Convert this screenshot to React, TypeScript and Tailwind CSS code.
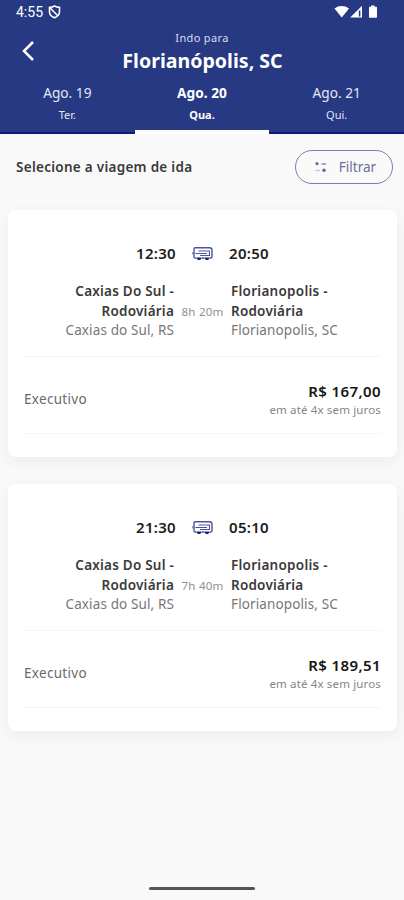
interface Trip {
  id: number;
  departure: string;
  arrival: string;
  duration: string;
  price: string;
}

interface Day {
  date: string;
  weekday: string;
  active?: boolean;
}

const days: Day[] = [
  { date: "Ago. 19", weekday: "Ter." },
  { date: "Ago. 20", weekday: "Qua.", active: true },
  { date: "Ago. 21", weekday: "Qui." },
];

const trips: Trip[] = [
  { id: 1, departure: "12:30", arrival: "20:50", duration: "8h 20m", price: "R$ 167,00" },
  { id: 2, departure: "21:30", arrival: "05:10", duration: "7h 40m", price: "R$ 189,51" },
];

const BusIcon = () => (
  <svg width="21" height="15" viewBox="0 0 21 15" fill="none" stroke="#4a549c">
    <path d="M4.5 12H3.2c-.8 0-1.2-.4-1.2-1.2V3c0-.8.4-1.200 1.200-1.200H17.500c1.300 0 2.500.9 2.500 2.200v6.500c0 1-.5 1.500-1.500 1.500h-1M9.500 12h3" strokeWidth="1.400" />
    <path d="M6.500 5h11v4.500H8M4 7.500h11M17.500 5V10" strokeWidth="1.100" />
    <path d="M.5 6v2.500M2 7.300h2" strokeWidth="1" opacity=".6" />
    <path d="M5 12a2 1.600 0 0 0 4 0zM13 12a2 1.600 0 0 0 4 0z" fill="#15207a" stroke="#15207a" strokeWidth="1" />
  </svg>
);

const StatusBar = () => (
  <div className="flex h-6 items-center justify-between pl-4 pr-[26px]">
    <div className="flex items-center gap-[5px]">
      <span className="font-[Roboto,sans-serif] text-[14px] leading-6">4:55</span>
      <svg width="13" height="14" viewBox="0 0 13 14" fill="none" stroke="currentColor" strokeWidth="1.600">
        <path d="M6.500 1C4.800 2 3 2.300 1.500 2.400v4.400c0 3 2.200 5 5 6 2.800-1 5-3 5-6V2.400C10 2.300 8.200 2 6.500 1z" />
        <path d="m2 2.800 8 8.200" />
      </svg>
    </div>
    <svg width="44" height="14" viewBox="0 0 44 14" fill="currentColor">
      <path d="M.5 3.500C4.800.2 10.700.2 15 3.500L7.700 12.500z" />
      <path d="M28 .8v11.700H16.200z" />
      <path d="M25.600 5.500v6" stroke="#263982" strokeWidth="1.600" />
      <path d="M37 .5h3.500v1.300H42c.6 0 1 .4 1 1v9c0 .6-.4 1-1 1h-6c-.6 0-1-.4-1-1v-9c0-.6.400-1 1-1h1z" />
    </svg>
  </div>
);

const Header = () => (
  <header className="flex h-[134px] flex-col bg-[#263982] text-white">
    <StatusBar />
    <div className="grid h-[56px] grid-cols-[60px_1fr_60px] pt-1">
      <button className="flex h-[46px] items-center pl-[20px]" aria-label="Voltar">
        <svg width="15" height="20" viewBox="0 0 15 20" fill="none" stroke="currentColor" strokeWidth="2.500">
          <path d="M13 1 4 10l9 9" />
        </svg>
      </button>
      <div className="text-center">
        <p className="pt-0.5 text-[11px] leading-4 tracking-[0.35px] text-[#d8dcf0]">Indo para</p>
        <h1 className="pt-[1px] pl-[1px] text-[19.600px] leading-7 font-bold whitespace-nowrap">Florianópolis, SC</h1>
      </div>
    </div>
    <div className="grid flex-1 grid-cols-3 text-center">
      {days.map((day) => (
        <div
          key={day.date}
          className={
            day.active
              ? "border-b-4 border-white pt-[3px] font-bold"
              : "border-b-2 border-[#0b1b7c] pt-[3px] text-[#e3e6f5]"
          }
        >
          <p className="text-[13.700px] leading-5">{day.date}</p>
          <p className="pt-[3px] text-[11px] leading-[18px]">{day.weekday}</p>
        </div>
      ))}
    </div>
  </header>
);

const TripCard = ({ trip }: { trip: Trip }) => (
  <article className="h-[247px] rounded-lg bg-white px-4 shadow-[0_4px_16px_rgba(0,0,0,0.06)]">
    <div className="flex h-[147px] flex-col border-b border-[#f5f5f5] pt-8 text-[13.500px] leading-[19.700px] tracking-[0.22px]">
      <div className="grid h-10 grid-cols-[152px_53px_1fr] text-[15px] leading-[22px] font-semibold tracking-[0.3px] text-[#1c1c1c]">
        <p className="text-right">{trip.departure}</p>
        <div className="flex h-[23px] items-center justify-center">
          <BusIcon />
        </div>
        <p>{trip.arrival}</p>
      </div>
      <div className="grid grid-cols-[150px_57px_1fr] items-center">
        <div className="text-right">
          <p className="font-semibold text-[#3a3a3a]">Caxias Do Sul -</p>
          <p className="font-semibold text-[#3a3a3a]">Rodoviária</p>
          <p className="tracking-[0.12px] text-[#777]">Caxias do Sul, RS</p>
        </div>
        <p className="text-center text-[11.500px] whitespace-nowrap text-[#8f8f8f]">{trip.duration}</p>
        <div>
          <p className="font-semibold tracking-[0.27px] text-[#3a3a3a]">Florianopolis -</p>
          <p className="font-semibold text-[#3a3a3a]">Rodoviária</p>
          <p className="tracking-[0.12px] text-[#777]">Florianopolis, SC</p>
        </div>
      </div>
    </div>
    <div className="flex h-[77px] items-center justify-between border-b border-[#f5f5f5] pt-2">
      <p className="text-[13.500px] tracking-[0.3px] text-[#6a6a6a]">Executivo</p>
      <div className="pt-0.5 text-right">
        <p className="text-[15px] leading-[19px] font-semibold tracking-[0.4px] text-[#151515]">{trip.price}</p>
        <p className="text-[11.500px] leading-[17px] tracking-[0.15px] text-[#858585]">em até 4x sem juros</p>
      </div>
    </div>
  </article>
);

export default function App() {
  return (
    <div className="flex h-[900px] w-[404px] flex-col bg-[#f9f9f9] font-['Noto_Sans',sans-serif]">
      <Header />
      <main className="flex-1">
        <div className="flex h-[76px] items-center justify-between pr-[11px] pb-[10px] pl-4">
          <h2 className="text-[13.500px] font-semibold tracking-[0.28px] text-[#3a3a3a]">Selecione a viagem de ida</h2>
          <button className="flex h-[34px] w-[98px] items-center justify-center gap-3 rounded-full border border-[#7c80a8] pl-[3px] text-[13.500px] text-[#696e9b]">
            <svg width="12" height="12" viewBox="0 0 12 12" fill="none" stroke="currentColor" strokeWidth="1.200">
              <circle cx="2" cy="2.700" r="1" fill="currentColor" />
              <path d="M6.500 3h4.500" />
              <path d="M.5 9.500H5" opacity=".4" />
              <circle cx="9" cy="9.300" r="1.200" fill="currentColor" />
            </svg>
            Filtrar
          </button>
        </div>
        <div className="flex flex-col gap-[27px] pr-[7px] pl-2">
          {trips.map((trip) => (
            <TripCard key={trip.id} trip={trip} />
          ))}
        </div>
      </main>
      <footer className="flex h-[13px] justify-center">
        <div className="h-[3px] w-[106px] rounded-full bg-[#555]" />
      </footer>
    </div>
  );
}
